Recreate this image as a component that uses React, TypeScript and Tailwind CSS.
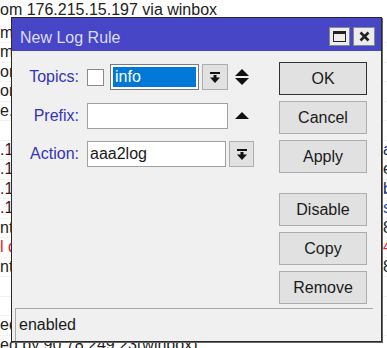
import React from 'react';

type Row = { left: string; right?: string; leftColor?: string; rightColor?: string };

const rows: Row[] = [
  { left: 'm' },
  { left: 'm' },
  { left: 'or' },
  { left: 'or' },
  { left: 'e. -' },
  { left: '' },
  { left: '.1', leftColor: 'text-[#4a1010]', right: 'a', rightColor: 'text-[#1a2a6a]' },
  { left: '.1', leftColor: 'text-[#4a1010]', right: 'e', rightColor: 'text-[#222]' },
  { left: '.1', leftColor: 'text-[#4a1010]', right: 'b', rightColor: 'text-[#1a2a6a]' },
  { left: '.1', leftColor: 'text-[#4a1010]', right: 's', rightColor: 'text-[#2a4aa0]' },
  { left: 'nt', right: '8', rightColor: 'text-[#222]' },
  { left: 'l d', leftColor: 'text-[#e0203a]', right: '4', rightColor: 'text-[#e0203a]' },
  { left: 'nt', right: '8', rightColor: 'text-[#222]' },
  { left: '' },
  { left: '' },
  { left: 'ed' },
  { left: 'ed by 90.78.249.23(winbox)' },
];

function DropIcon() {
  return (
    <svg width="10" height="11" viewBox="0 0 10 11">
      <rect x="0" y="0" width="10" height="2" fill="#111" />
      <rect x="3.5" y="3" width="3" height="3" fill="#111" />
      <polygon points="0,5.5 10,5.5 5,11" fill="#111" />
    </svg>
  );
}

function DropButton({ width }: { width: string }) {
  return (
    <div className={`${width} h-[26px] bg-[#e1e1e1] border border-[#adadad] flex items-center justify-center`}>
      <DropIcon />
    </div>
  );
}

function DialogButton({ label, primary }: { label: string; primary?: boolean }) {
  return (
    <div
      className={`w-[88px] h-[33px] flex items-center justify-center bg-[#e1e1e1] text-[16px] text-[#1a1a1a] border ${
        primary ? 'border-[#333]' : 'border-[#adadad]'
      }`}
    >
      {label}
    </div>
  );
}

export default function App() {
  return (
    <div className="relative w-[387px] h-[348px] overflow-hidden bg-white font-['Liberation_Sans',Arial,sans-serif] text-[16px] text-[#222]">
      {/* log list behind the dialog */}
      <div className="flex flex-col">
        <div className="h-[23.5px] leading-[20px] whitespace-nowrap">om 176.215.15.197 via winbox</div>
        {rows.map((r, i) => (
          <div key={i} className="h-[19.5px] flex items-center whitespace-nowrap border-b border-[#f2f2f2]">
            <div className={`w-[382px] shrink-0 overflow-hidden ${r.leftColor ?? ''}`}>{r.left}</div>
            <div className={`pl-[1px] ${r.rightColor ?? ''}`}>{r.right}</div>
          </div>
        ))}
      </div>

      {/* New Log Rule window */}
      <div className="absolute left-[11px] top-[17px] w-[371px] h-[325px] border border-[#2a2a2a] shadow-[1px_1px_0_#666] flex flex-col bg-[#f0f0f0]">
        <div className="h-[33px] bg-[#4646c6] flex items-center justify-between pl-[8px] pr-[6px]">
          <span className="text-[#dcdcff] pt-[6px]">New Log Rule</span>
          <div className="flex gap-[3px] pt-[4px]">
            <div className="w-[21px] h-[19px] bg-[#ececec] border border-[#888] flex items-center justify-center">
              <div className="w-[13px] h-[11px] border border-[#222] border-t-[3px]" />
            </div>
            <div className="w-[22px] h-[19px] bg-[#ececec] border border-[#888] flex items-center justify-center">
              <svg width="11" height="11" viewBox="0 0 11 11">
                <path d="M1.5 1.5 L9.5 9.5 M9.5 1.5 L1.5 9.5" stroke="#222" strokeWidth="2.6" />
              </svg>
            </div>
          </div>
        </div>

        <div className="flex-1 flex flex-col">
          <div className="flex justify-between pr-[14px]">
            <div className="pt-[13px] flex flex-col">
              <div className="h-[26px] flex items-center">
                <span className="w-[68px] text-right pr-[1px] text-[#3434b8]">Topics:</span>
                <div className="ml-[7px] w-[17px] h-[17px] bg-white border border-[#8a8a8a]" />
                <div className="ml-[6px] w-[89px] h-[26px] bg-white border border-[#7a7a7a] p-[2px]">
                  <div className="h-full bg-[#0078d7] text-white pl-[2px] leading-[20px]">info</div>
                </div>
                <div className="ml-[3px]">
                  <DropButton width="w-[26px]" />
                </div>
                <svg className="ml-[7px]" width="14" height="16" viewBox="0 0 14 16">
                  <polygon points="7,0 14,7 0,7" fill="#111" />
                  <polygon points="0,9 14,9 7,16" fill="#111" />
                </svg>
              </div>

              <div className="mt-[13px] h-[26px] flex items-center">
                <span className="w-[68px] text-right pr-[1px] text-[#3434b8]">Prefix:</span>
                <div className="ml-[7px] w-[141px] h-[26px] bg-white border border-[#a0a0a0]" />
                <svg className="ml-[7px]" width="14" height="8" viewBox="0 0 14 8">
                  <polygon points="7,0 14,7 0,7" fill="#111" />
                </svg>
              </div>

              <div className="mt-[12px] h-[26px] flex items-center">
                <span className="w-[68px] text-right pr-[1px] text-[#3434b8]">Action:</span>
                <div className="ml-[7px] w-[139px] h-[26px] bg-white border border-[#a0a0a0] pl-[2px] leading-[24px] text-[#1a1a1a]">
                  aaa2log
                </div>
                <div className="ml-[3px]">
                  <DropButton width="w-[25px]" />
                </div>
              </div>
            </div>

            <div className="pt-[11px] flex flex-col gap-[6px]">
              <DialogButton label="OK" primary />
              <DialogButton label="Cancel" />
              <DialogButton label="Apply" />
              <div className="h-[8px]" />
              <DialogButton label="Disable" />
              <DialogButton label="Copy" />
              <DialogButton label="Remove" />
            </div>
          </div>

          <div className="flex-1" />

          <div className="ml-[3px] mr-[8px] h-[33px] border-t border-l border-[#a8a8a8] flex items-center pl-[3px] text-[#1a1a1a]">
            enabled
          </div>
        </div>
      </div>
    </div>
  );
}
